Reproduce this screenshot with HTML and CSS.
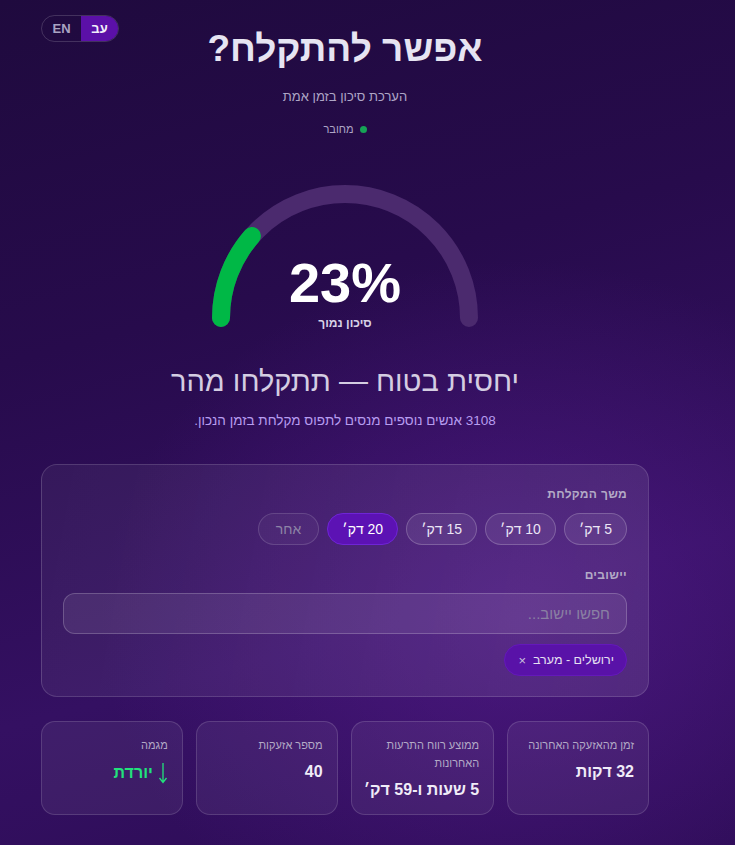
FILE: index.html
```html
<!DOCTYPE html>
<html lang="he" dir="rtl">
<head>
<meta charset="utf-8">
<title>אפשר להתקלח?</title>
<link rel="stylesheet" href="styles.css">
</head>
<body>
<main class="page">
  <div class="lang-toggle" dir="ltr">
    <span class="lang lang-en">EN</span>
    <span class="lang lang-he active">עב</span>
  </div>

  <header class="hero">
    <h1 class="title">אפשר להתקלח?</h1>
    <p class="subtitle">הערכת סיכון בזמן אמת</p>
    <p class="status"><span class="dot"></span>מחובר</p>
  </header>

  <section class="gauge">
    <svg class="gauge-svg" width="280" height="146" viewBox="0 0 280 146">
      <path d="M 16 134 A 124 124 0 0 1 264 134" fill="none" stroke="#4b2a6e" stroke-width="18" stroke-linecap="round"/>
      <path d="M 16 134 A 124 124 0 0 1 46.95 52" fill="none" stroke="#00b846" stroke-width="18" stroke-linecap="round"/>
    </svg>
    <div class="gauge-text">
      <div class="percent">23%</div>
      <div class="risk">סיכון נמוך</div>
    </div>
  </section>

  <h2 class="verdict">יחסית בטוח — תתקלחו מהר</h2>
  <p class="others">3108 אנשים נוספים מנסים לתפוס מקלחת בזמן הנכון.</p>

  <section class="panel">
    <div class="field-label">משך המקלחת</div>
    <div class="pills">
      <button class="pill">5 דק׳</button>
      <button class="pill">10 דק׳</button>
      <button class="pill">15 דק׳</button>
      <button class="pill active">20 דק׳</button>
      <button class="pill muted">אחר</button>
    </div>

    <div class="field-label second">יישובים</div>
    <input class="search" type="text" placeholder="חפשו יישוב...">
    <div class="chips">
      <span class="chip">ירושלים - מערב <span class="chip-x">×</span></span>
    </div>
  </section>

  <section class="stats">
    <div class="stat">
      <div class="stat-label">זמן מהאזעקה האחרונה</div>
      <div class="stat-value">32 דקות</div>
    </div>
    <div class="stat">
      <div class="stat-label">ממוצע רווח התרעות האחרונות</div>
      <div class="stat-value">5 שעות ו-59 דק׳</div>
    </div>
    <div class="stat">
      <div class="stat-label">מספר אזעקות</div>
      <div class="stat-value">40</div>
    </div>
    <div class="stat">
      <div class="stat-label">מגמה</div>
      <div class="stat-value trend">
        <svg class="arrow" width="10" height="22" viewBox="0 0 10 22"><path d="M5 1 V20 M1.5 16 L5 20.5 L8.5 16" fill="none" stroke="#22e27c" stroke-width="1.3"/></svg>
        <span>יורדת</span>
      </div>
    </div>
  </section>
</main>
</body>
</html>
```

FILE: styles.css
```css
* { box-sizing: border-box; }

html, body {
  margin: 0;
  padding: 0;
  min-height: 100%;
}

body {
  font-family: "Liberation Sans", "DejaVu Sans", sans-serif;
  color: #e8e4f2;
  background:
    radial-gradient(ellipse 420px 360px at 520px 620px, rgba(92, 30, 150, 0.55), rgba(92, 30, 150, 0) 100%),
    linear-gradient(165deg, #1f0a3e 0%, #270b4c 35%, #341062 70%, #2c0c55 100%);
  min-height: 845px;
}

.page {
  position: relative;
  width: 608px;
  margin-left: 41px;
  margin-right: auto;
  padding-top: 1px;
  padding-bottom: 30px;
}

/* language toggle */
.lang-toggle {
  position: absolute;
  top: 15px;
  left: 0;
  display: flex;
  height: 27px;
  border: 1px solid rgba(255, 255, 255, 0.16);
  border-radius: 14px;
  overflow: hidden;
  font-weight: bold;
  font-size: 13px;
}
.lang {
  display: flex;
  align-items: center;
  justify-content: center;
}
.lang-en {
  width: 39px;
  color: #a9a3c2;
}
.lang-he {
  width: 37px;
  background: #5b10a8;
  color: #f2eefa;
}

/* hero */
.hero {
  text-align: center;
}
.title {
  margin: 26px 0 0;
  font-size: 37px;
  font-weight: bold;
  line-height: 44px;
  color: #e6e4f2;
}
.subtitle {
  margin: 18px 0 0;
  font-size: 13px;
  line-height: 16px;
  color: #aea6c6;
}
.status {
  margin: 17px 0 0;
  font-size: 11px;
  line-height: 14px;
  color: #aea6c6;
  display: flex;
  justify-content: center;
  align-items: center;
  gap: 6px;
}
.dot {
  width: 7px;
  height: 7px;
  border-radius: 50%;
  background: #16a356;
}

/* gauge */
.gauge {
  position: relative;
  width: 280px;
  height: 146px;
  margin: 48px auto 0;
}
.gauge-svg {
  display: block;
}
.gauge-text {
  position: absolute;
  left: 0;
  right: 0;
  top: 67px;
  text-align: center;
}
.percent {
  font-weight: bold;
  font-size: 56px;
  line-height: 64px;
  color: #ffffff;
}
.risk {
  margin-top: 1px;
  font-size: 12px;
  font-weight: bold;
  line-height: 14px;
  color: #d8d2e6;
}

.verdict {
  margin: 34px 0 0;
  text-align: center;
  font-weight: normal;
  font-size: 29px;
  line-height: 34px;
  color: #d4cde2;
}
.others {
  margin: 14px 0 0;
  text-align: center;
  font-size: 13.5px;
  line-height: 18px;
  color: #b79df0;
}

/* panel */
.panel {
  margin-top: 34px;
  padding: 22px 21px 20px;
  border: 1px solid rgba(255, 255, 255, 0.14);
  border-radius: 16px;
  background: linear-gradient(100deg, rgba(255, 255, 255, 0.05), rgba(255, 255, 255, 0.09));
}
.field-label {
  font-size: 12px;
  font-weight: bold;
  line-height: 14px;
  color: #b3aac6;
  letter-spacing: 0.3px;
}
.field-label.second {
  margin-top: 23px;
}
.pills {
  display: flex;
  gap: 8px;
  margin-top: 12px;
}
.pill {
  height: 32px;
  padding: 0 14px;
  border-radius: 16px;
  border: 1px solid rgba(255, 255, 255, 0.2);
  background: rgba(255, 255, 255, 0.08);
  color: #ebe6f5;
  font-family: "Liberation Sans", "DejaVu Sans", sans-serif;
  font-size: 14px;
}
.pill.active {
  background: #5c12b4;
  border-color: #6f24d6;
  color: #ffffff;
}
.pill.muted {
  padding: 0 17px;
  color: #8d84a6;
  background: rgba(255, 255, 255, 0.04);
  border-color: rgba(255, 255, 255, 0.14);
}
.search {
  display: block;
  width: 100%;
  height: 41px;
  margin-top: 11px;
  padding: 0 16px;
  border: 1px solid rgba(255, 255, 255, 0.2);
  border-radius: 12px;
  background: rgba(255, 255, 255, 0.08);
  color: #ebe6f5;
  font-family: "Liberation Sans", "DejaVu Sans", sans-serif;
  font-size: 15px;
  outline: none;
}
.search::placeholder {
  color: #8a80a3;
}
.chips {
  display: flex;
  margin-top: 10px;
}
.chip {
  display: inline-flex;
  align-items: center;
  gap: 7px;
  height: 32px;
  padding: 0 12px 0 13px;
  border-radius: 16px;
  background: #5912a8;
  border: 1px solid #6418bb;
  font-size: 12.5px;
  color: #e6e0f2;
}
.chip-x {
  font-size: 13px;
  color: #c9c0de;
}

/* stats */
.stats {
  display: grid;
  grid-template-columns: repeat(4, 1fr);
  gap: 13px;
  margin-top: 24px;
}
.stat {
  padding: 14px 14px 12px 12px;
  border: 1px solid rgba(255, 255, 255, 0.14);
  border-radius: 14px;
  background: rgba(255, 255, 255, 0.06);
  min-height: 94px;
}
.stat-label {
  font-size: 11px;
  line-height: 18px;
  color: #b3aac6;
}
.stat-value {
  margin-top: 8px;
  font-size: 16px;
  font-weight: bold;
  line-height: 20px;
  color: #f0ecf8;
  white-space: nowrap;
}
.stat-value.trend {
  display: flex;
  align-items: center;
  gap: 5px;
  color: #22e27c;
}
.arrow {
  display: block;
}
```
